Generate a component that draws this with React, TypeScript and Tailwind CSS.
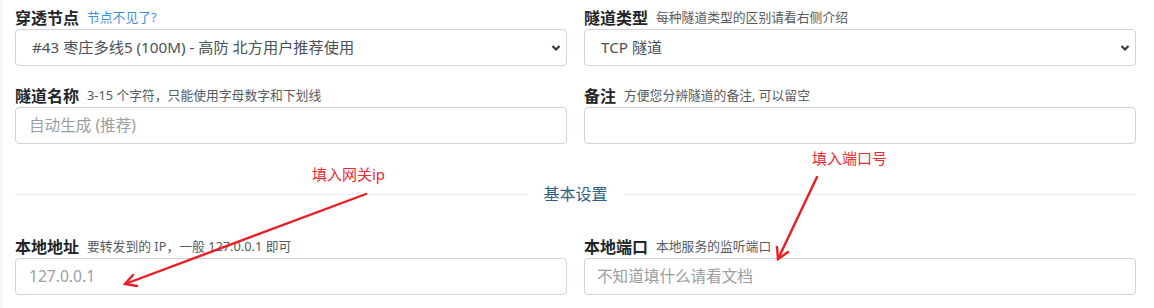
import React, { FC } from "react";

const font = { fontFamily: '"Noto Sans", "Noto Sans CJK SC", sans-serif' };

interface LabelProps {
  title: string;
  hint: string;
  link?: boolean;
}

const Label: FC<LabelProps> = (props) => (
  <div className="flex items-center h-[22px] gap-[8px] whitespace-nowrap">
    <span className="font-bold text-[16px] text-[#212529]">{props.title}</span>
    <span
      className={
        props.link
          ? "text-[12.8px] text-[#3d8fdc]"
          : "text-[12.8px] text-[#555b61]"
      }
    >
      {props.hint}
    </span>
  </div>
);

const Chevron: FC = () => (
  <svg
    className="absolute right-[5px] top-1/2 -translate-y-1/2 pointer-events-none"
    width="10"
    height="7"
    viewBox="0 0 10 7"
  >
    <path d="M1.5 1.5 L5 5 L8.5 1.5" fill="none" stroke="#343a40" strokeWidth="2.2" />
  </svg>
);

const FakeSelect: FC<{ value: string; pl: string }> = ({ value, pl }) => (
  <div
    className={`relative h-[37px] border border-[#ced4da] rounded-[4px] bg-white flex items-center ${pl} text-[15.2px] text-[#495057]`}
  >
    <span className="whitespace-nowrap">{value}</span>
    <Chevron />
  </div>
);

const FakeInput: FC<{ placeholder?: string; pl: string }> = ({ placeholder, pl }) => (
  <div
    className={`h-[37px] border border-[#ced4da] rounded-[4px] bg-white flex items-center ${pl} text-[15.6px] text-[#9a9ea3]`}
  >
    <span className="whitespace-nowrap">{placeholder}</span>
  </div>
);

export default function App() {
  return (
    <div
      className="relative w-[1154px] h-[308px] bg-white overflow-hidden border-l-[3px] border-[#f6f7f8]"
      style={font}
    >
      <div className="pl-[12px] pr-[18px] pt-[7px]">
        <div className="grid grid-cols-2 gap-x-[17px]">
          <div>
            <Label title="穿透节点" hint="节点不见了?" link />
            <FakeSelect value="#43 枣庄多线5 (100M) - 高防 北方用户推荐使用" pl="pl-[16px]" />
          </div>
          <div>
            <Label title="隧道类型" hint="每种隧道类型的区别请看右侧介绍" />
            <FakeSelect value="TCP 隧道" pl="pl-[16px]" />
          </div>
        </div>

        <div className="grid grid-cols-2 gap-x-[17px] mt-[19px]">
          <div>
            <Label title="隧道名称" hint="3-15 个字符，只能使用字母数字和下划线" />
            <FakeInput placeholder="自动生成 (推荐)" pl="pl-[13px]" />
          </div>
          <div>
            <Label title="备注" hint="方便您分辨隧道的备注, 可以留空" />
            <FakeInput pl="pl-[12px]" />
          </div>
        </div>

        <div className="flex items-center h-[24px] mt-[38px]">
          <div className="flex-1 h-px bg-[#e9ecef]" />
          <span className="px-[17px] text-[16px] text-[#2f5f84]">基本设置</span>
          <div className="flex-1 h-px bg-[#e9ecef]" />
        </div>

        <div className="grid grid-cols-2 gap-x-[17px] mt-[30px]">
          <div>
            <Label title="本地地址" hint="要转发到的 IP，一般 127.0.0.1 即可" />
            <FakeInput placeholder="127.0.0.1" pl="pl-[13px]" />
          </div>
          <div>
            <Label title="本地端口" hint="本地服务的监听端口" />
            <FakeInput placeholder="不知道填什么请看文档" pl="pl-[12px]" />
          </div>
        </div>
      </div>

      {/* red annotations drawn over the form */}
      <span className="absolute left-[309px] top-[163px] text-[15px] text-[#ee2a35] whitespace-nowrap">
        填入网关ip
      </span>
      <span className="absolute left-[809px] top-[147px] text-[15px] text-[#ee2a35] whitespace-nowrap">
        填入端口号
      </span>
      <svg
        className="absolute left-[-3px] top-0 pointer-events-none"
        width="1154"
        height="308"
        viewBox="0 0 1154 308"
      >
        <g fill="none" stroke="#ec1c24" strokeWidth="2.4" strokeLinecap="round">
          <path d="M366 194 L125 284" />
          <path d="M137 286 L125 284 L133 275" />
          <path d="M817 177 L778 259" />
          <path d="M788 252 L778 259 L777 247" />
        </g>
      </svg>
    </div>
  );
}
